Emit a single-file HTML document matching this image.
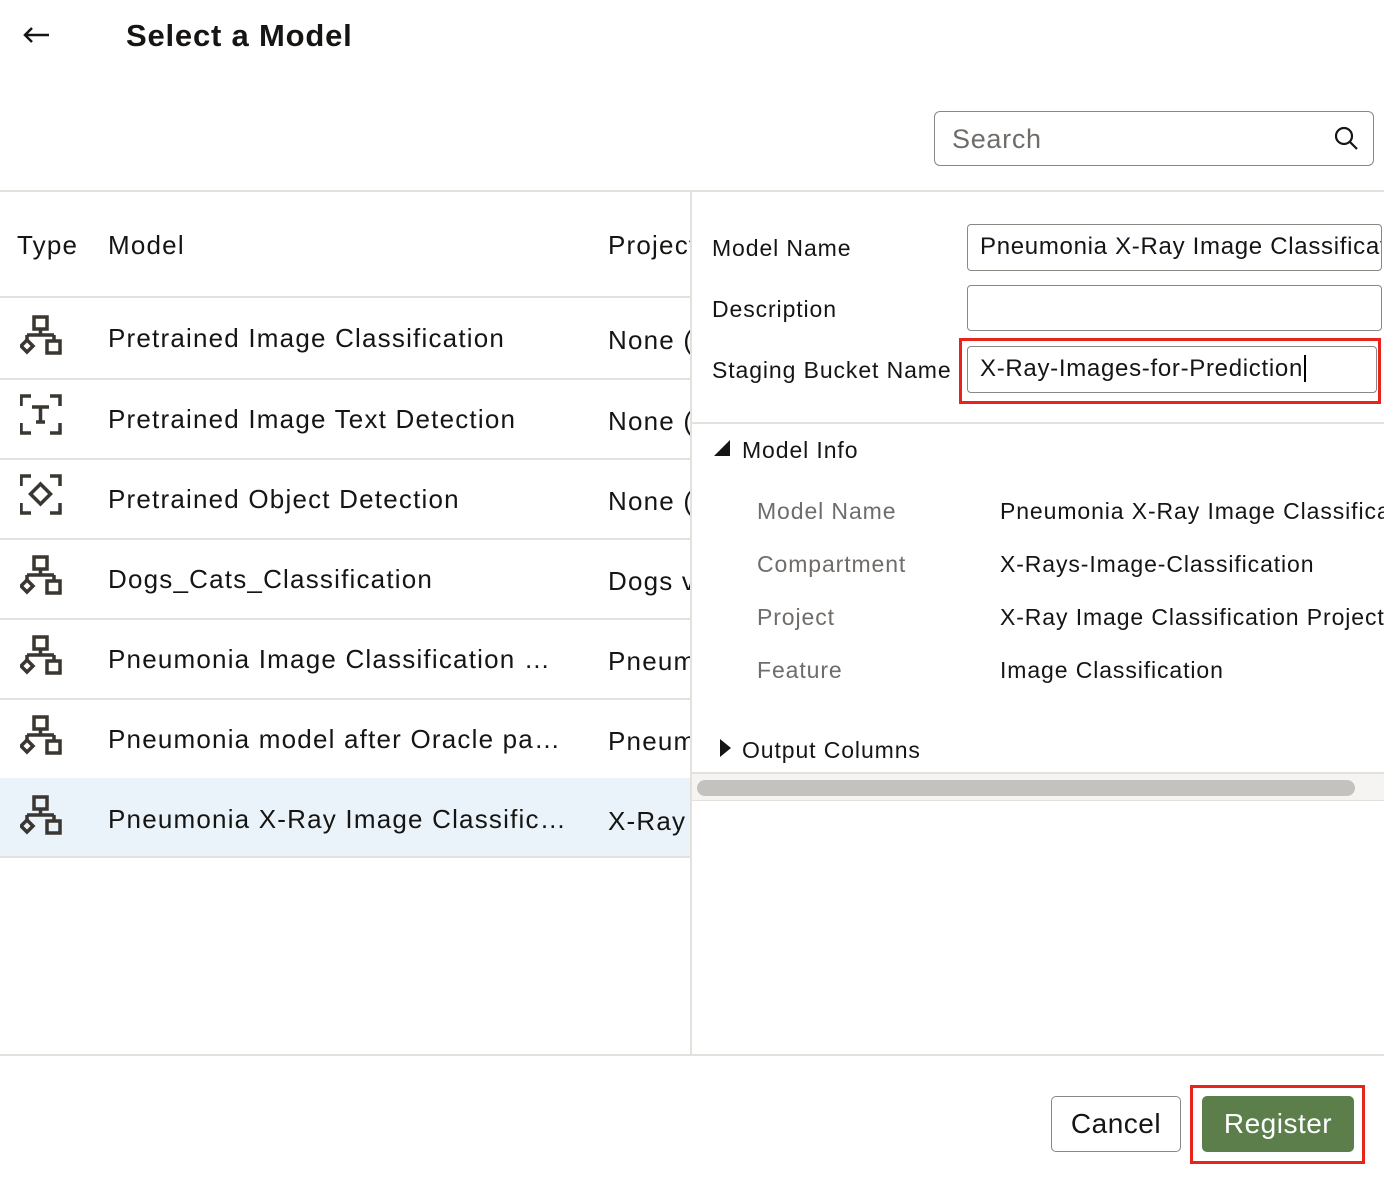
<!DOCTYPE html>
<html><head><style>
body{margin:0;width:1384px;height:1182px;background:#fff;font-family:"Liberation Sans",sans-serif;color:#161513;position:relative;overflow:hidden}
.a{position:absolute}
.t{font-size:26px;white-space:nowrap;letter-spacing:1.2px}
.row{position:absolute;left:0;width:690px;height:80px;border-bottom:2px solid #e4e1dd}
.lbl{font-size:23px;color:#161513;letter-spacing:0.9px;white-space:nowrap}
.g{font-size:23px;color:#6f6c6a;letter-spacing:0.9px}
.inp{position:absolute;border:1.5px solid #8b8782;border-radius:4px;background:#fff;font-size:24px;padding-left:12px;box-sizing:border-box;line-height:44px;overflow:hidden;white-space:nowrap;letter-spacing:0.7px}
</style></head><body>
<svg class="a" style="left:22px;top:26px" width="28" height="18" viewBox="0 0 28 18"><path d="M27 9H3M10 2L3 9l7 7" fill="none" stroke="#161513" stroke-width="2.5"/></svg>
<div class="a" style="left:126px;top:18px;font-size:31px;font-weight:bold;letter-spacing:0.8px">Select a Model</div>
<div class="inp" style="left:934px;top:111px;width:440px;height:55px;line-height:54px;font-size:27px;color:#6f6c6a;padding-left:17px;border-radius:6px">Search
<svg style="position:absolute;right:14px;top:13px" width="26" height="26" viewBox="0 0 26 26"><circle cx="11" cy="11" r="8" fill="none" stroke="#161513" stroke-width="2.2"/><line x1="17" y1="17" x2="24" y2="24" stroke="#161513" stroke-width="2.2"/></svg></div>
<div class="a" style="left:0;top:190px;width:1384px;height:2px;background:#e4e1dd"></div>
<div class="a" style="left:690px;top:192px;width:2px;height:862px;background:#e4e1dd"></div>
<div class="a" style="left:0;top:1054px;width:1384px;height:2px;background:#e4e1dd"></div>
<div class="row" style="top:218px;height:78px"></div>
<div class="a t" style="left:17px;top:230px">Type</div>
<div class="a t" style="left:108px;top:230px">Model</div>
<div class="a t" style="left:608px;top:230px;width:82px;overflow:hidden">Project</div>
<svg width="0" height="0" style="position:absolute"><defs>
<g id="m" fill="none" stroke="#3a3631" stroke-width="3.5"><rect x="14" y="3" width="13" height="12"/><path d="M20.5 15v6M7 21h27M7 21v6M34 21v5"/><path d="M7 26l6 6-6 6-6-6z"/><rect x="27" y="27" width="13" height="12"/></g>
<g id="f" fill="none" stroke="#3a3631" stroke-width="3.5"><path d="M1 12V2h10M30 2h10v10M40 29v10H30M11 39H1V29"/></g>
</defs></svg>
<div class="row" style="top:298px"></div>
<div class="row" style="top:378px"></div>
<div class="row" style="top:458px"></div>
<div class="row" style="top:538px"></div>
<div class="row" style="top:618px"></div>
<div class="row" style="top:698px"></div>
<div class="row" style="top:778px;background:#e9f3f9;height:78px"></div>
<svg class="a" style="left:20px;top:314px" width="42" height="42"><use href="#m"/></svg>
<svg class="a" style="left:20px;top:394px" width="42" height="42"><use href="#f"/><path d="M12 13h17M20.5 13v15M16 28h9" stroke="#3a3631" stroke-width="3.5" fill="none"/></svg>
<svg class="a" style="left:20px;top:474px" width="42" height="42"><use href="#f"/><path d="M20.5 10l10 10-10 10-10-10z" stroke="#3a3631" stroke-width="3.5" fill="none"/></svg>
<svg class="a" style="left:20px;top:554px" width="42" height="42"><use href="#m"/></svg>
<svg class="a" style="left:20px;top:634px" width="42" height="42"><use href="#m"/></svg>
<svg class="a" style="left:20px;top:714px" width="42" height="42"><use href="#m"/></svg>
<svg class="a" style="left:20px;top:794px" width="42" height="42"><use href="#m"/></svg>
<div class="a t" style="left:108px;top:323px">Pretrained Image Classification</div>
<div class="a t" style="left:108px;top:404px">Pretrained Image Text Detection</div>
<div class="a t" style="left:108px;top:484px">Pretrained Object Detection</div>
<div class="a t" style="left:108px;top:564px">Dogs_Cats_Classification</div>
<div class="a t" style="left:108px;top:644px">Pneumonia Image Classification …</div>
<div class="a t" style="left:108px;top:724px">Pneumonia model after Oracle pa…</div>
<div class="a t" style="left:108px;top:804px">Pneumonia X-Ray Image Classific…</div>
<div class="a t" style="left:608px;top:325px;width:82px;overflow:hidden">None (</div>
<div class="a t" style="left:608px;top:406px;width:82px;overflow:hidden">None (</div>
<div class="a t" style="left:608px;top:486px;width:82px;overflow:hidden">None (</div>
<div class="a t" style="left:608px;top:566px;width:82px;overflow:hidden">Dogs v</div>
<div class="a t" style="left:608px;top:646px;width:82px;overflow:hidden">Pneum</div>
<div class="a t" style="left:608px;top:726px;width:82px;overflow:hidden">Pneum</div>
<div class="a t" style="left:608px;top:806px;width:82px;overflow:hidden">X-Ray</div>

<div class="a lbl" style="left:712px;top:235px">Model Name</div>
<div class="a lbl" style="left:712px;top:296px">Description</div>
<div class="a lbl" style="left:712px;top:357px">Staging Bucket Name</div>
<div class="inp" style="left:967px;top:224px;width:415px;height:47px">Pneumonia X-Ray Image Classification</div>
<div class="inp" style="left:967px;top:285px;width:415px;height:46px"></div>
<div class="inp" style="left:967px;top:346px;width:410px;height:47px">X-Ray-Images-for-Prediction<span style="border-left:2px solid #000;margin-left:1px"></span></div>
<div class="a" style="left:959px;top:338px;width:416px;height:60px;border:3px solid #e8231c"></div>
<div class="a" style="left:692px;top:422px;width:692px;height:2px;background:#e4e1dd"></div>
<div class="a" style="left:714px;top:440px;width:0;height:0;border-left:16px solid transparent;border-bottom:16px solid #161513"></div>
<div class="a lbl" style="left:742px;top:437px">Model Info</div>
<div class="a g" style="left:757px;top:498px">Model Name</div>
<div class="a g" style="left:757px;top:551px">Compartment</div>
<div class="a g" style="left:757px;top:604px">Project</div>
<div class="a g" style="left:757px;top:657px">Feature</div>
<div class="a lbl" style="left:1000px;top:498px">Pneumonia X-Ray Image Classification</div>
<div class="a lbl" style="left:1000px;top:551px">X-Rays-Image-Classification</div>
<div class="a lbl" style="left:1000px;top:604px">X-Ray Image Classification Project</div>
<div class="a lbl" style="left:1000px;top:657px">Image Classification</div>
<div class="a" style="left:720px;top:739px;width:0;height:0;border-top:9px solid transparent;border-bottom:9px solid transparent;border-left:11px solid #161513"></div>
<div class="a lbl" style="left:742px;top:737px">Output Columns</div>
<div class="a" style="left:692px;top:772px;width:692px;height:2px;background:#e4e1dd"></div>
<div class="a" style="left:692px;top:774px;width:692px;height:26px;background:#f5f4f2;border-bottom:1px solid #e4e1dd"></div>
<div class="a" style="left:697px;top:780px;width:658px;height:16px;border-radius:8px;background:#c4c2bf"></div>

<div class="a" style="left:1051px;top:1096px;width:130px;height:56px;border:1.5px solid #8b8782;border-radius:5px;box-sizing:border-box;text-align:center;line-height:54px;font-size:28px;letter-spacing:0.5px">Cancel</div>
<div class="a" style="left:1202px;top:1096px;width:152px;height:56px;border-radius:5px;background:#5b7e4b;color:#fff;text-align:center;line-height:56px;font-size:28px;letter-spacing:0.5px">Register</div>
<div class="a" style="left:1190px;top:1085px;width:169px;height:73px;border:3px solid #e8231c"></div>
</body></html>
